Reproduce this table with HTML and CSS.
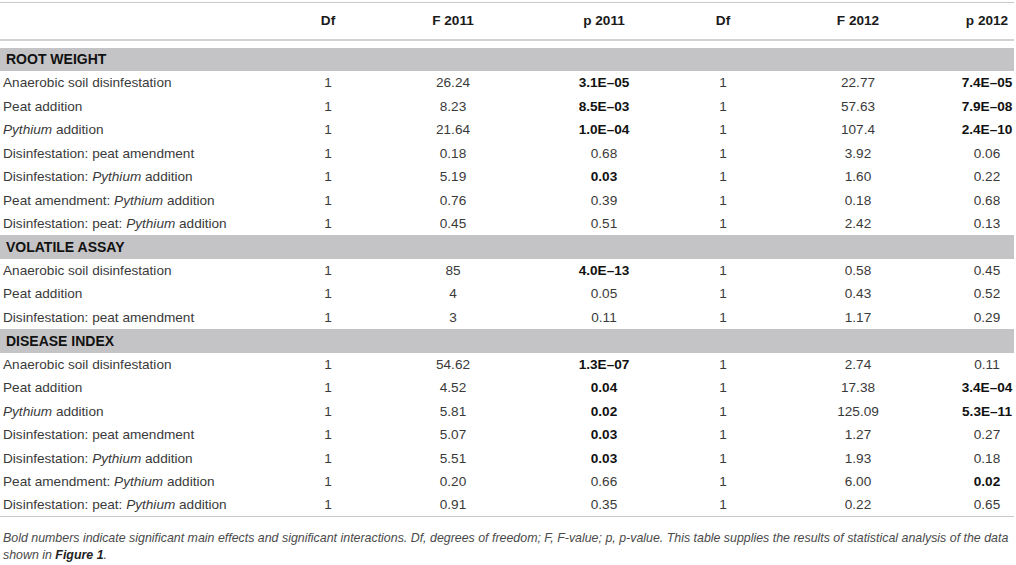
FILE: index.html
```html
<!DOCTYPE html>
<html lang="en">
<head>
    <meta charset="UTF-8">
    <title>Table: Analysis of variance</title>
    <link rel="stylesheet" href="styles.css">
</head>
<body>
    <table class="stats">
        <colgroup>
            <col class="c-label">
            <col class="c-df">
            <col class="c-f1">
            <col class="c-p1">
            <col class="c-df2">
            <col class="c-f2">
            <col class="c-p2">
        </colgroup>
        <thead>
            <tr>
                <th></th>
                <th>Df</th>
                <th>F 2011</th>
                <th>p 2011</th>
                <th>Df</th>
                <th>F 2012</th>
                <th>p 2012</th>
            </tr>
        </thead>
        <tbody>
            <tr class="spacer"><td colspan="7"></td></tr>
            <tr class="section"><td colspan="7">ROOT WEIGHT</td></tr>
            <tr><td>Anaerobic soil disinfestation</td><td>1</td><td>26.24</td><td><b>3.1E–05</b></td><td>1</td><td>22.77</td><td><b>7.4E–05</b></td></tr>
            <tr><td>Peat addition</td><td>1</td><td>8.23</td><td><b>8.5E–03</b></td><td>1</td><td>57.63</td><td><b>7.9E–08</b></td></tr>
            <tr><td><i>Pythium</i> addition</td><td>1</td><td>21.64</td><td><b>1.0E–04</b></td><td>1</td><td>107.4</td><td><b>2.4E–10</b></td></tr>
            <tr><td>Disinfestation: peat amendment</td><td>1</td><td>0.18</td><td>0.68</td><td>1</td><td>3.92</td><td>0.06</td></tr>
            <tr><td>Disinfestation: <i>Pythium</i> addition</td><td>1</td><td>5.19</td><td><b>0.03</b></td><td>1</td><td>1.60</td><td>0.22</td></tr>
            <tr><td>Peat amendment: <i>Pythium</i> addition</td><td>1</td><td>0.76</td><td>0.39</td><td>1</td><td>0.18</td><td>0.68</td></tr>
            <tr><td>Disinfestation: peat: <i>Pythium</i> addition</td><td>1</td><td>0.45</td><td>0.51</td><td>1</td><td>2.42</td><td>0.13</td></tr>
            <tr class="section"><td colspan="7">VOLATILE ASSAY</td></tr>
            <tr><td>Anaerobic soil disinfestation</td><td>1</td><td>85</td><td><b>4.0E–13</b></td><td>1</td><td>0.58</td><td>0.45</td></tr>
            <tr><td>Peat addition</td><td>1</td><td>4</td><td>0.05</td><td>1</td><td>0.43</td><td>0.52</td></tr>
            <tr><td>Disinfestation: peat amendment</td><td>1</td><td>3</td><td>0.11</td><td>1</td><td>1.17</td><td>0.29</td></tr>
            <tr class="section"><td colspan="7">DISEASE INDEX</td></tr>
            <tr><td>Anaerobic soil disinfestation</td><td>1</td><td>54.62</td><td><b>1.3E–07</b></td><td>1</td><td>2.74</td><td>0.11</td></tr>
            <tr><td>Peat addition</td><td>1</td><td>4.52</td><td><b>0.04</b></td><td>1</td><td>17.38</td><td><b>3.4E–04</b></td></tr>
            <tr><td><i>Pythium</i> addition</td><td>1</td><td>5.81</td><td><b>0.02</b></td><td>1</td><td>125.09</td><td><b>5.3E–11</b></td></tr>
            <tr><td>Disinfestation: peat amendment</td><td>1</td><td>5.07</td><td><b>0.03</b></td><td>1</td><td>1.27</td><td>0.27</td></tr>
            <tr><td>Disinfestation: <i>Pythium</i> addition</td><td>1</td><td>5.51</td><td><b>0.03</b></td><td>1</td><td>1.93</td><td>0.18</td></tr>
            <tr><td>Peat amendment: <i>Pythium</i> addition</td><td>1</td><td>0.20</td><td>0.66</td><td>1</td><td>6.00</td><td><b>0.02</b></td></tr>
            <tr class="last"><td>Disinfestation: peat: <i>Pythium</i> addition</td><td>1</td><td>0.91</td><td>0.35</td><td>1</td><td>0.22</td><td>0.65</td></tr>
        </tbody>
    </table>
    <p class="caption">Bold numbers indicate significant main effects and significant interactions. Df, degrees of freedom; F, F-value; p, p-value. This table supplies the results of statistical analysis of the data shown in <b>Figure 1</b>.</p>
</body>
</html>
```

FILE: styles.css
```css
* {
    box-sizing: border-box;
}
body {
    margin: 0;
    padding: 0;
    background: #fff;
    font-family: "Liberation Sans", Arial, sans-serif;
    color: #3a3a3a;
}
.stats {
    width: 1014px;
    table-layout: fixed;
    border-collapse: collapse;
    margin-top: 2px;
    font-size: 13.6px;
    border-top: 1px solid #c9c9c9;
}
.c-label { width: 268px; }
.c-df { width: 120px; }
.c-f1 { width: 130px; }
.c-p1 { width: 172px; }
.c-df2 { width: 66px; }
.c-f2 { width: 204px; }
.c-p2 { width: 54px; }

th {
    height: 37px;
    padding: 0;
    text-align: center;
    font-weight: bold;
    color: #1a1a1a;
    border-bottom: 2px solid #d2d2d2;
    white-space: nowrap;
}
td {
    height: 23.47px;
    padding: 0;
    text-align: center;
    white-space: nowrap;
}
td:first-child {
    text-align: left;
    padding-left: 3px;
}
td b {
    color: #111;
}
.spacer td {
    height: 8px;
}
.section td {
    background: #c4c4c6;
    font-weight: bold;
    font-size: 14px;
    color: #111;
    padding-left: 6px;
}
.last td {
    border-bottom: 1px solid #c9c9c9;
}
.caption {
    margin: 13px 0 0;
    padding: 0 3px;
    width: 1016px;
    font-size: 12.4px;
    line-height: 17px;
    font-style: italic;
    color: #4a4a4a;
}
.caption b {
    color: #222;
}
```
